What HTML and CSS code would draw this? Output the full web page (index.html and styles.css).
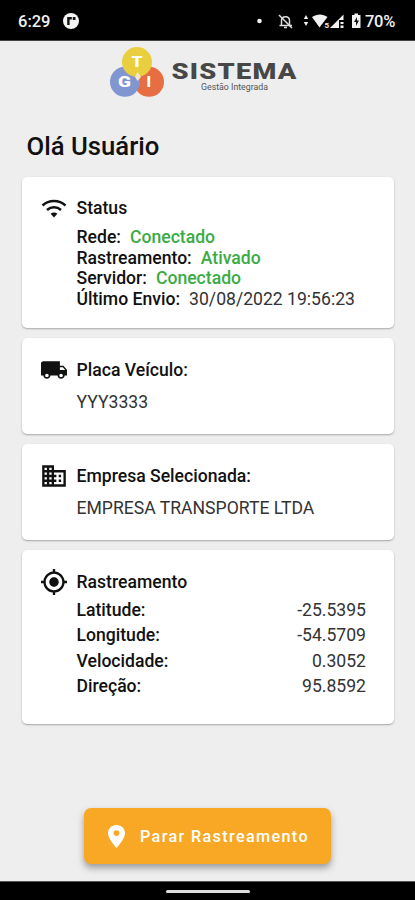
FILE: index.html
```html
<!DOCTYPE html>
<html lang="pt-BR">
<head>
<meta charset="utf-8">
<meta name="viewport" content="width=device-width, initial-scale=1">
<title>Sistema Gestão Integrada</title>
<link rel="stylesheet" href="styles.css">
</head>
<body>
<div class="screen">
  <header class="statusbar">
    <span class="clock">6:29</span>
    <svg class="app-badge" width="16" height="16" viewBox="0 0 16 16"><circle cx="8" cy="8" r="8" fill="#f4f4f4"/><path d="M4.200 4h4.600v2.600H6.600V12H4.200zM9.800 4h2.700v3H9.800z" fill="#111"/></svg>
    <span class="spacer"></span>
    <svg class="tray" width="106" height="18" viewBox="0 0 106 18" fill="#f1f1f1">
      <circle cx="3.500" cy="9" r="2.300"/>
      <g fill="none" stroke="#ddd" stroke-width="1.500"><path d="M25.500 13V8.500c0-5 8-5 8 0V13M23.500 13.500h12.500M28 15.500h3"/><path d="M23 3l13 13"/></g>
      <path d="M50 3l2.200 4h-4.400zM50 14l-2.200-4h4.400z"/>
      <path d="M56 5c5-3.500 11-3.500 15.500 0l-8 10.500z"/>
      <path d="M74 16L87.500 2.500V8h-4.500v8z"/><path d="M84.500 10h3v2h-3zM84.500 13.500h3V16h-3z"/>
      <path d="M98.500 1.500h3.500V3h2.500v13H96V3h2.500z"/>
      <path d="M101 5l-3 5h2v4l3-5.500h-2z" fill="#111"/>
      <text class="tray-mark" x="68.500" y="16">5</text>
    </svg>
    <span class="battery">70%</span>
  </header>

  <div class="brand">
    <svg width="190" height="54" viewBox="0 0 190 54">
      <circle cx="40" cy="34.800" r="15" fill="#e66e42"/>
      <circle cx="16" cy="34.800" r="15" fill="#8195d0"/>
      <circle cx="28" cy="15" r="15" fill="#e9ce40"/>
      <path d="M28.500 25l3.500 5-3.500 4-2.500-4z" fill="#f4e6cb"/>
      <text class="ball" x="22.500" y="20" textLength="11" lengthAdjust="spacingAndGlyphs">T</text>
      <text class="ball" x="9" y="40" textLength="13" lengthAdjust="spacingAndGlyphs">G</text>
      <text class="ball" x="37.500" y="40">I</text>
      <text class="wordmark" x="62.500" y="31.500" textLength="126" lengthAdjust="spacingAndGlyphs">SISTEMA</text>
      <text class="tagline" x="92" y="42.500" textLength="67" lengthAdjust="spacingAndGlyphs">Gestão Integrada</text>
    </svg>
  </div>

  <h1>Olá Usuário</h1>

  <main class="cards">
    <section class="card card-status">
      <svg class="icon" viewBox="0 0 26 26" fill="none" stroke="#111" stroke-width="2.500"><path d="M1.500 9.500c6.500-6 16.500-6 23 0M6 14c4-3.600 10-3.600 14 0"/><path d="M9.600 17.800c2-1.700 4.800-1.700 6.800 0L13 21.500z" fill="#111" stroke="none"/></svg>
      <div class="body">
        <h2>Status</h2>
        <p><b>Rede:</b><span class="ok">Conectado</span></p>
        <p><b>Rastreamento:</b><span class="ok">Ativado</span></p>
        <p><b>Servidor:</b><span class="ok">Conectado</span></p>
        <p><b>Último Envio:</b><span class="date">30/08/2022 19:56:23</span></p>
      </div>
    </section>
    <section class="card">
      <svg class="icon" viewBox="1 0 22 24" preserveAspectRatio="none" fill="#111"><path d="M20 8h-3V4H3c-1.100 0-2 .9-2 2v11h2c0 1.660 1.340 3 3 3s3-1.340 3-3h6c0 1.660 1.340 3 3 3s3-1.340 3-3h2v-5l-3-4zM6 18.500c-.83 0-1.500-.67-1.500-1.500s.67-1.500 1.500-1.500 1.500.67 1.500 1.500-.67 1.500-1.500 1.500zm13.500-9l1.960 2.500H17V9.500h2.500zm-1.500 9c-.83 0-1.500-.67-1.500-1.500s.67-1.500 1.500-1.500 1.500.67 1.500 1.500-.67 1.500-1.500 1.500z"/></svg>
      <div class="body">
        <h2>Placa Veículo:</h2>
        <div class="value">YYY3333</div>
      </div>
    </section>
    <section class="card">
      <svg class="icon" viewBox="1 1 22 22" fill="#111"><path d="M12 7V3H2v18h20V7H12zM6 19H4v-2h2v2zm0-4H4v-2h2v2zm0-4H4V9h2v2zm0-4H4V5h2v2zm4 12H8v-2h2v2zm0-4H8v-2h2v2zm0-4H8V9h2v2zm0-4H8V5h2v2zm10 12h-8v-2h2v-2h-2v-2h2v-2h-2V9h8v10zm-2-8h-2v2h2v-2zm0 4h-2v2h2v-2z"/></svg>
      <div class="body">
        <h2>Empresa Selecionada:</h2>
        <div class="value">EMPRESA TRANSPORTE LTDA</div>
      </div>
    </section>
    <section class="card card-track">
      <svg class="icon" viewBox="1 1 22 22" fill="#111"><path d="M12 8c-2.210 0-4 1.790-4 4s1.790 4 4 4 4-1.790 4-4-1.790-4-4-4zm8.940 3c-.46-4.170-3.770-7.480-7.940-7.940V1h-2v2.060C6.830 3.520 3.520 6.830 3.060 11H1v2h2.060c.46 4.170 3.770 7.480 7.940 7.940V23h2v-2.060c4.170-.46 7.480-3.770 7.940-7.940H23v-2h-2.060zM12 19c-3.870 0-7-3.130-7-7s3.130-7 7-7 7 3.130 7 7-3.130 7-7 7z"/></svg>
      <div class="body">
        <h2>Rastreamento</h2>
        <div class="row"><b>Latitude:</b><span>-25.5395</span></div>
        <div class="row"><b>Longitude:</b><span>-54.5709</span></div>
        <div class="row"><b>Velocidade:</b><span>0.3052</span></div>
        <div class="row"><b>Direção:</b><span>95.8592</span></div>
      </div>
    </section>
  </main>

  <div class="actions">
    <button class="stop" type="button">
      <svg width="17" height="23" viewBox="5 2 14 20" preserveAspectRatio="none" fill="#fff"><path d="M12 2C8.130 2 5 5.130 5 9c0 5.250 7 13 7 13s7-7.750 7-13c0-3.870-3.130-7-7-7zm0 9.500c-1.380 0-2.500-1.120-2.500-2.500s1.120-2.500 2.500-2.500 2.500 1.120 2.500 2.500-1.120 2.500-2.500 2.500z"/></svg>
      <span>Parar Rastreamento</span>
    </button>
  </div>
  <footer class="navbar"><span class="handle"></span></footer>
</div>
</body>
</html>
```

FILE: styles.css
```css
* { box-sizing: border-box; }
body { margin: 0; background: #eee; font-family: Roboto, "Liberation Sans", sans-serif; color: #111; }
h1, h2, p { margin: 0; }
.screen { width: 415px; height: 900px; display: flex; flex-direction: column; background: #eee; overflow: hidden; }

.statusbar { height: 41px; flex: none; background: #000; color: #f1f1f1; display: flex; align-items: center; padding: 2px 19px 0 18px; font-size: 16.500px; font-weight: 500; border-bottom: 1px solid #444; }
.app-badge { margin-left: 13px; }
.spacer { flex: 1; }
.tray { margin-right: 3px; }
.tray-mark { font-size: 8px; font-weight: 700; stroke: #000; stroke-width: 2px; paint-order: stroke; }
.battery { font-size: 16.500px; width: 31px; letter-spacing: -0.300px; }

.brand { height: 54px; margin: 6px 0 0 109px; }
.brand svg { display: block; }
.ball { font-size: 15px; font-weight: 900; fill: #fff; }
.wordmark { font-size: 22px; font-weight: 900; letter-spacing: 1px; fill: #474747; }
.tagline { font-size: 8.500px; fill: #555; }

h1 { font-size: 25.700px; line-height: 30px; font-weight: 500; margin: 30px 0 16px 26.500px; }

.cards { display: flex; flex-direction: column; gap: 10px; padding: 0 21px 0 22px; }
.card { height: 96px; background: #fff; border-radius: 5px; box-shadow: 0 1px 2px rgba(0,0,0,.3); padding: 19px 28px 0 19px; display: flex; gap: 9.500px; }
.card-status { height: 151px; }
.card-track { height: 174px; }
.icon { width: 26px; height: 26px; flex: none; }
.body { flex: 1; }
h2 { font-size: 17.600px; line-height: 26px; font-weight: 500; }
b { font-weight: 500; }
p { font-size: 17.600px; line-height: 20.700px; display: flex; gap: 9px; white-space: nowrap; }
.card-status .body { margin-top: -1px; }
.card-status h2 { margin-bottom: 6px; }
.ok { color: #3bab45; font-weight: 500; }
.date, .value, .row span { font-weight: 400; color: #333; }
.value { font-size: 17.600px; line-height: 26px; margin-top: 6px; white-space: nowrap; }
.row { display: flex; justify-content: space-between; font-size: 17.600px; line-height: 25.300px; }
.card-track h2 { margin-bottom: 3px; }

.actions { display: flex; margin: 84px 0 17px 84px; }
.stop { width: 247px; height: 56px; border: 0; border-radius: 7px; background: #f9a825; color: #fff; font: 500 16.200px Roboto, sans-serif; letter-spacing: 1.350px; display: flex; align-items: center; gap: 15px; padding: 0 0 0 24px; box-shadow: 0 4px 7px rgba(0,0,0,.35); white-space: nowrap; }
.navbar { height: 19px; flex: none; background: #000; border-top: 1px solid #555; display: flex; justify-content: center; align-items: center; }
.handle { width: 84px; height: 3px; border-radius: 2px; background: #ddd; }
```
